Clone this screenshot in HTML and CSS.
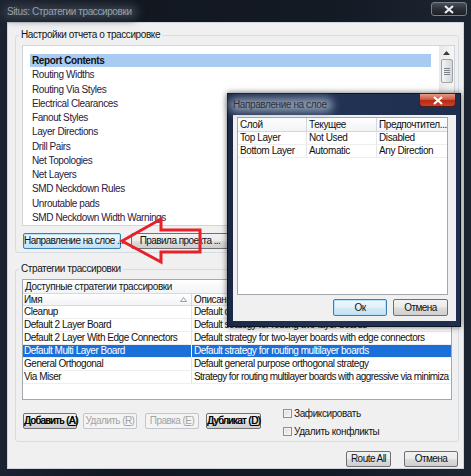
FILE: index.html
```html
<!DOCTYPE html>
<html lang="ru">
<head>
<meta charset="utf-8">
<title>Situs</title>
<link rel="stylesheet" href="styles.css">
</head>
<body>
<div class="window">
  <div class="titlebar">
    <span class="title">Situs: Стратегии трассировки</span>
    <div class="close close-inactive">
      <svg width="12" height="9" viewBox="0 0 12 9"><path d="M2 1 L10 8 M10 1 L2 8" stroke="#e8ecf0" stroke-width="2.2" fill="none"/></svg>
    </div>
  </div>
  <div class="client">
    <fieldset class="group group-report">
      <legend>Настройки отчета о трассировке</legend>
      <div class="listbox report-list">
        <ul class="items">
          <li class="sel">Report Contents</li>
          <li>Routing Widths</li>
          <li>Routing Via Styles</li>
          <li>Electrical Clearances</li>
          <li>Fanout Styles</li>
          <li>Layer Directions</li>
          <li>Drill Pairs</li>
          <li>Net Topologies</li>
          <li>Net Layers</li>
          <li>SMD Neckdown Rules</li>
          <li>Unroutable pads</li>
          <li>SMD Neckdown Width Warnings</li>
        </ul>
        <div class="vscroll">
          <div class="sb-btn"><svg width="7" height="4" viewBox="0 0 7 4"><path d="M0 4 L3.5 0 L7 4 Z" fill="#3a3a3a"/></svg></div>
          <div class="sb-thumb"><i></i><i></i><i></i><i></i></div>
        </div>
      </div>
      <div class="btn-row">
        <button class="btn btn-focus w-dir">Направление на слое ...</button>
        <button class="btn w-rules">Правила проекта ...</button>
      </div>
    </fieldset>

    <fieldset class="group group-strat">
      <legend>Стратегии трассировки</legend>
      <div class="grid strat-grid">
        <div class="grid-caption">Доступные стратегии трассировки</div>
        <div class="grid-head">
          <div class="c1">Имя<svg class="sort" width="7" height="5" viewBox="0 0 7 5"><path d="M0.5 4.5 L3.5 0.5 L6.5 4.5 Z" fill="none" stroke="#9aa0a8" stroke-width="1"/></svg></div>
          <div class="c2">Описание</div>
        </div>
        <div class="grid-row"><div class="c1">Cleanup</div><div class="c2">Default cleanup strategy</div></div>
        <div class="grid-row"><div class="c1">Default 2 Layer Board</div><div class="c2">Default strategy for routing two-layer boards</div></div>
        <div class="grid-row"><div class="c1">Default 2 Layer With Edge Connectors</div><div class="c2">Default strategy for two-layer boards with edge connectors</div></div>
        <div class="grid-row selected"><div class="c1">Default Multi Layer Board</div><div class="c2">Default strategy for routing multilayer boards</div></div>
        <div class="grid-row"><div class="c1">General Orthogonal</div><div class="c2">Default general purpose orthogonal strategy</div></div>
        <div class="grid-row"><div class="c1">Via Miser</div><div class="c2 tight">Strategy for routing multilayer boards with aggressive via minimiza</div></div>
      </div>
      <div class="strat-actions">
        <button class="btn btn-strong w-add">Добавить (<u>A</u>)</button>
        <button class="btn w-del" disabled>Удалить (<u>R</u>)</button>
        <button class="btn w-edit" disabled>Правка (<u>E</u>)</button>
        <button class="btn btn-strong w-dup">Дубликат (<u>D</u>)</button>
        <div class="checks">
          <label class="check"><span class="box"></span>Зафиксировать</label>
          <label class="check"><span class="box"></span>Удалить конфликты</label>
        </div>
      </div>
    </fieldset>

    <div class="footer">
      <button class="btn w-route">Route All</button>
      <button class="btn w-cancel">Отмена</button>
    </div>
  </div>
</div>

<div class="dialog">
  <div class="dlg-titlebar">
    <span class="dlg-title">Направление на слое</span>
    <div class="close close-active">
      <svg width="12" height="9" viewBox="0 0 12 9"><path d="M2 1 L10 8 M10 1 L2 8" stroke="#ffffff" stroke-width="2.2" fill="none"/></svg>
    </div>
  </div>
  <div class="dlg-client">
    <div class="grid layer-grid">
      <div class="lg-row lg-head"><div>Слой</div><div>Текущее</div><div>Предпочтител...</div></div>
      <div class="lg-row"><div>Top Layer</div><div>Not Used</div><div>Disabled</div></div>
      <div class="lg-row"><div>Bottom Layer</div><div>Automatic</div><div>Any Direction</div></div>
    </div>
    <div class="dlg-buttons">
      <button class="btn btn-focus dlg-btn">Ок</button>
      <button class="btn dlg-btn dlg-cancel">Отмена</button>
    </div>
  </div>
</div>

<svg class="callout" width="471" height="476" viewBox="0 0 471 476">
  <polygon points="122,241 161,219 161,230 200,230 200,252 161,252 161,262" fill="none" stroke="#e8202a" stroke-width="3" stroke-linejoin="miter"/>
</svg>
</body>
</html>
```

FILE: styles.css
```css
* { box-sizing: border-box; }

body {
  margin: 0;
  width: 471px;
  height: 476px;
  overflow: hidden;
  position: relative;
  background: #151b25;
  font-family: "Liberation Sans", Arial, sans-serif;
  font-size: 10px;
  letter-spacing: -0.4px;
  color: #111;
}

button {
  font-family: inherit;
  font-size: 10px;
  letter-spacing: -0.55px;
  margin: 0;
}

/* ---------- main window ---------- */
.window {
  width: 471px;
  height: 476px;
  display: flex;
  flex-direction: column;
  padding: 0 7px 7px 7px;
  background: linear-gradient(90deg, #1c2330 0%, #121720 25%, #141a24 70%, #1d2431 100%);
}

.titlebar {
  height: 22px;
  flex: none;
  display: flex;
  justify-content: space-between;
  align-items: flex-start;
}

.title {
  position: relative;
  isolation: isolate;
  margin-top: 6px;
  color: #98a1ab;
  line-height: 12px;
}

.title::before {
  content: "";
  position: absolute;
  left: -4px;
  right: -6px;
  top: -1px;
  bottom: -1px;
  border-radius: 8px;
  background: #363e4a;
  filter: blur(4px);
  z-index: -1;
}

.close {
  width: 36px;
  height: 14px;
  display: flex;
  align-items: center;
  justify-content: center;
  border-radius: 0 0 4px 4px;
}

.close-inactive {
  margin-top: 2px;
  margin-right: -3px;
  border: 1px solid #7a8088;
  background: linear-gradient(#4a5058 0%, #2b3038 50%, #1c2026 100%);
  border-radius: 3px;
}

.client {
  flex: 1;
  display: flex;
  flex-direction: column;
  background: #f0f0f0;
  border: 1px solid #cfd5dc;
  padding: 6px 4px 0 7px;
}

.group {
  margin: 0;
  min-width: 0;
  border: 1px solid #d5dde3;
  border-radius: 3px;
  padding: 4px 3px 3px 6px;
}

.group legend {
  padding: 0 2px;
  margin-left: -3px;
  line-height: 12px;
  color: #151515;
}

/* ---------- report list ---------- */
.listbox {
  background: #fff;
  border: 1px solid #d2d5d9;
}

.report-list {
  height: 181px;
  width: 433px;
  display: flex;
}

.items {
  list-style: none;
  margin: 0;
  flex: 1;
  padding: 8px 8px 0 7px;
}

.items li {
  height: 13px;
  line-height: 13px;
  margin-bottom: 1.25px;
  padding-left: 2px;
  color: #2a2040;
  white-space: nowrap;
}

.items li.sel {
  background: #a9cbf1;
  font-weight: bold;
  color: #101018;
}

.vscroll {
  width: 15px;
  background: linear-gradient(90deg, #e9e9e9, #f6f6f6);
  display: flex;
  flex-direction: column;
  align-items: center;
}

.sb-btn {
  height: 13px;
  width: 100%;
  display: flex;
  align-items: center;
  justify-content: center;
}

.sb-thumb {
  width: 12px;
  height: 24px;
  border: 1px solid #9da3aa;
  border-radius: 2px;
  background: linear-gradient(90deg, #f4f4f4, #e4e4e4 50%, #d6d6d6);
  display: flex;
  flex-direction: column;
  align-items: center;
  justify-content: center;
  gap: 1px;
}

.sb-thumb i {
  display: block;
  width: 6px;
  height: 1px;
  background: #7c828a;
}

/* ---------- buttons ---------- */
.btn {
  height: 16px;
  padding: 0;
  border: 1px solid #707070;
  border-radius: 2px;
  color: #111;
  background: linear-gradient(#f2f2f2 0%, #ebebeb 48%, #dddddd 52%, #cfcfcf 100%);
  white-space: nowrap;
  line-height: 14px;
  text-align: center;
  overflow: visible;
}

.btn-focus {
  border-color: #3c7fb1;
  box-shadow: inset 0 0 0 1px #b8e2f8;
  background: linear-gradient(#eef7fc 0%, #e3f1fa 48%, #d4eaf8 52%, #c4e0f4 100%);
}

.btn:disabled {
  border-color: #c2c6ca;
  background: #f4f4f4;
  color: #a3a3a3;
}

.btn-strong {
  color: #000;
  text-shadow: 0.45px 0 0 #000;
}

.btn-row {
  display: flex;
  margin-top: 7px;
  padding-left: 1px;
  gap: 10px;
}

.w-dir { width: 98px; }
.w-rules { width: 98px; }

/* ---------- strategies ---------- */
.group-strat {
  margin-top: 10px;
}

.grid {
  background: #fff;
  border: 1px solid #a3a8ae;
  overflow: hidden;
}

.strat-grid {
  width: 430px;
  height: 121px;
}

.grid-caption {
  height: 14px;
  line-height: 13px;
  padding-left: 2px;
  background: linear-gradient(#ffffff, #f2f3f5);
  border-bottom: 1px solid #d8dadd;
  color: #151515;
}

.grid-head,
.grid-row {
  display: flex;
  white-space: nowrap;
}

.grid-head {
  height: 12px;
  line-height: 11px;
  background: linear-gradient(#ffffff, #f2f3f5);
  border-bottom: 1px solid #d8dadd;
}

.grid-row {
  height: 13px;
  line-height: 12px;
  border-bottom: 1px solid #eeeeee;
  letter-spacing: -0.48px;
}

.grid-head .c1,
.grid-row .c1 {
  width: 169px;
  flex: none;
  padding-left: 1px;
  border-right: 1px solid #e2e2e2;
  overflow: hidden;
  position: relative;
}

.grid-head .c1 { border-right-color: #d5d7da; }

.grid-head .c2,
.grid-row .c2 {
  flex: 1;
  padding-left: 2px;
  overflow: hidden;
}

.grid-row .c2.tight { letter-spacing: -0.58px; }

.sort {
  position: absolute;
  right: 4px;
  top: 3px;
}

.grid-row.selected {
  background: #1b6fd8;
  color: #fff;
}

.grid-row.selected .c1 { border-right-color: #ffffff; }

.strat-actions {
  display: flex;
  align-items: flex-start;
  height: 32px;
  margin-top: 6px;
  padding-left: 1px;
}

.strat-actions .btn { margin-top: 7px; }

.w-add { width: 54px; }
.w-del { width: 54px; margin-left: 6px; }
.w-edit { width: 54px; margin-left: 8px; }
.w-dup { width: 55px; margin-left: 7px; }

.checks {
  margin-left: 22px;
  display: flex;
  flex-direction: column;
  gap: 4px;
}

.check {
  height: 14px;
  display: flex;
  align-items: center;
  gap: 2px;
  color: #151515;
}

.box {
  width: 9px;
  height: 9px;
  border: 1px solid #8e8f8f;
  background: linear-gradient(135deg, #dcdcdc, #f6f6f6);
  box-shadow: inset 0 0 0 1px #f4f4f4;
}

.footer {
  display: flex;
  justify-content: flex-end;
  margin-top: 9px;
  padding-right: 1px;
  gap: 13px;
}

.w-route { width: 45px; }
.w-cancel { width: 54px; }

/* ---------- dialog ---------- */
.dialog {
  position: absolute;
  left: 227px;
  top: 93px;
  width: 234px;
  height: 234px;
  display: flex;
  flex-direction: column;
  padding: 0 4px 5px 5px;
  background: linear-gradient(90deg, #1b2946 0%, #223354 40%, #1e2e4e 100%);
  border: 1px solid #0c1424;
  box-shadow: 0 0 6px rgba(0, 0, 0, 0.6);
}

.dlg-titlebar {
  height: 21px;
  flex: none;
  display: flex;
  justify-content: space-between;
  align-items: flex-start;
}

.dlg-title {
  position: relative;
  isolation: isolate;
  margin-top: 5px;
  line-height: 12px;
  color: #2a323e;
}

.dlg-title::before {
  content: "";
  position: absolute;
  left: -4px;
  right: -6px;
  top: -1px;
  bottom: -1px;
  border-radius: 8px;
  background: #8b9ab0;
  filter: blur(4px);
  z-index: -1;
}

.close-active {
  width: 37px;
  margin-top: -1px;
  margin-right: 0;
  border: 1px solid #5a1a14;
  background: linear-gradient(#e49b86 0%, #cf5a43 45%, #b52a14 55%, #c8452c 100%);
}

.dlg-client {
  flex: 1;
  background: #f0f0f0;
  padding: 2px 8px 0 4px;
  display: flex;
  flex-direction: column;
}

.layer-grid {
  height: 178px;
  flex: none;
}

.lg-row {
  display: flex;
  height: 13px;
  line-height: 12px;
  border-bottom: 1px solid #eeeeee;
  white-space: nowrap;
}

.lg-row > div {
  padding-left: 2px;
  overflow: hidden;
  border-right: 1px solid #e6e6e6;
}

.lg-row > div:nth-child(1) { width: 69px; }
.lg-row > div:nth-child(2) { width: 70px; }
.lg-row > div:nth-child(3) { flex: 1; border-right: none; }

.lg-head {
  height: 14px;
  line-height: 13px;
  background: linear-gradient(#ffffff, #f2f3f5);
  border-bottom: 1px solid #d5d7da;
}

.lg-head > div { border-right-color: #d5d7da; }

.dlg-buttons {
  display: flex;
  justify-content: flex-end;
  gap: 6px;
  margin-top: 4px;
}

.dlg-btn {
  width: 54px;
  height: 17px;
}

.dlg-cancel { width: 55px; }

/* ---------- callout arrow ---------- */
.callout {
  position: absolute;
  left: 0;
  top: 0;
  pointer-events: none;
}
```
